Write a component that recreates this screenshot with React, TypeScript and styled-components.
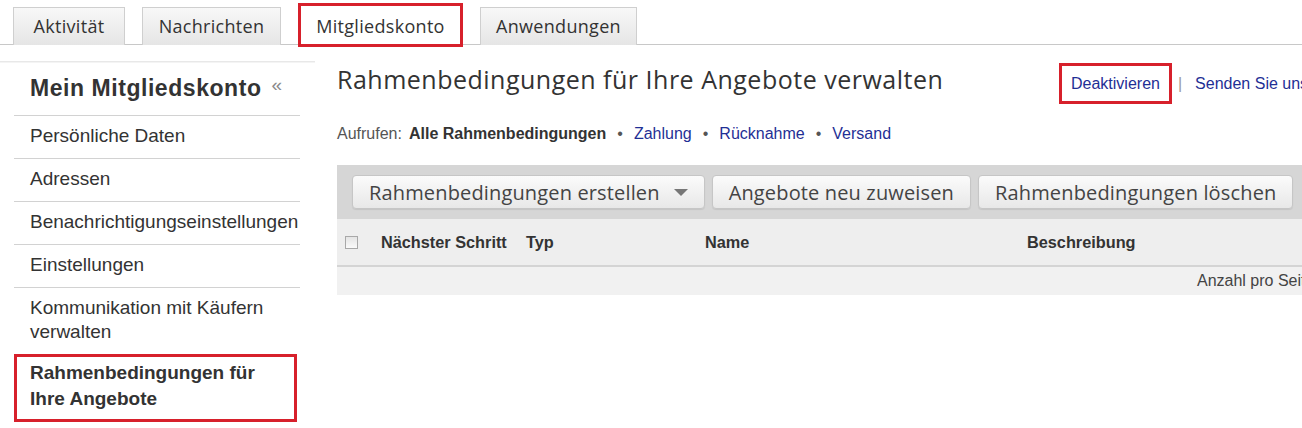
import React from "react";
import styled, { createGlobalStyle } from "styled-components";

const Global = createGlobalStyle`
  html, body { margin: 0; padding: 0; background: #fff; }
  body { font-family: "Liberation Sans", Arial, sans-serif; color: #333; }
  * { box-sizing: border-box; }
`;

const HUMAN = `"Open Sans", "Lato", sans-serif`;

const Page = styled.div`
  width: 1302px;
  height: 428px;
  overflow: hidden;
  background: #fff;
`;

const TabBar = styled.div`
  display: flex;
  align-items: flex-end;
  gap: 17px;
  height: 45px;
  padding-left: 13px;
  border-bottom: 1px solid #c8c8c8;
`;

const Tab = styled.div<{ $active?: boolean; $w: number }>`
  width: ${(p) => p.$w}px;
  height: 38px;
  margin-bottom: -1px;
  padding-bottom: 1px;
  display: flex;
  align-items: center;
  justify-content: center;
  font-family: ${HUMAN};
  font-size: 18px;
  letter-spacing: 0.3px;
  color: #333;
  white-space: nowrap;
  border: 1px solid #cfcfcf;
  border-bottom: none;
  background: linear-gradient(#f8f8f8, #e5e5e5);
  ${(p) =>
    p.$active
      ? `
    height: 44px;
    margin-bottom: -3px;
    padding-bottom: 0;
    padding-top: 2px;
    background: #fff;
    border: 3px solid #d7202b;
  `
      : ""}
`;

const Body = styled.div`
  display: flex;
  align-items: flex-start;
`;

const Sidebar = styled.nav`
  flex: 0 0 300px;
  width: 300px;
  min-width: 0;
  padding-left: 14px;
  margin-top: 16px;
  position: relative;
  &::before {
    content: "";
    position: absolute;
    left: 0;
    right: -15px;
    top: 0;
    height: 2px;
    background: linear-gradient(#e2e2e2, #fafafa);
  }
`;

const SideHead = styled.div`
  height: 55px;
  display: flex;
  align-items: center;
  padding-left: 16px;
  font-size: 23px;
  letter-spacing: 0.55px;
  font-weight: bold;
  color: #333;
  white-space: nowrap;
  border-bottom: 1px solid #d2d2d2;
`;

const Collapse = styled.span`
  margin-left: 10px;
  font-size: 19px;
  font-weight: normal;
  letter-spacing: 0;
  color: #8a8a8a;
  position: relative;
  top: -3px;
`;

const SideItem = styled.div<{ $current?: boolean; $last?: boolean }>`
  padding: 8px 0 10px 16px;
  font-size: 19px;
  line-height: 24px;
  color: #333;
  white-space: nowrap;
  border-bottom: ${(p) => (p.$last ? "none" : "1px solid #d2d2d2")};
  ${(p) =>
    p.$current
      ? `font-weight: bold; border: 3px solid #d7202b; padding: 3px 13px 7px 13px; line-height: 26px; width: 283px;`
      : ""}
`;

const Main = styled.main`
  flex: 0 0 1000px;
  margin-left: 37px;
`;

const TitleRow = styled.div`
  display: grid;
  grid-template-columns: 722px auto;
  align-items: start;
  height: 80px;
`;

const Title = styled.h1`
  margin: 17px 0 0;
  font-family: ${HUMAN};
  font-weight: normal;
  font-size: 25px;
  line-height: 34px;
  letter-spacing: 0.5px;
  color: #333;
  white-space: nowrap;
`;

const TopLinks = styled.div`
  margin-top: 18px;
  display: flex;
  align-items: center;
  font-size: 16px;
  white-space: nowrap;
`;

const Highlight = styled.span`
  border: 3px solid #d7202b;
  padding: 9px;
  line-height: 17px;
  color: #1f2f95;
`;

const Pipe = styled.span`
  color: #999;
  margin: 0 13px 0 6px;
`;

const BlueLink = styled.a`
  color: #1f2f95;
  text-decoration: none;
`;

const ViewBar = styled.div`
  font-size: 16px;
  line-height: 18px;
  color: #555;
  height: 40px;
  display: flex;
  align-items: flex-start;
  white-space: nowrap;
`;

const Current = styled.b`
  color: #333;
  margin-left: 7px;
`;

const Dot = styled.span`
  color: #555;
  margin: 0 11px;
`;

const Toolbar = styled.div`
  background: #d6d6d6;
  height: 54px;
  display: flex;
  align-items: center;
  gap: 7px;
  padding-left: 15px;
`;

const Button = styled.div`
  height: 34px;
  padding: 0 16px;
  display: flex;
  align-items: center;
  gap: 14px;
  border-radius: 4px;
  border: 1px solid #c6c6c6;
  background: linear-gradient(#fbfbfb, #e8e8e8);
  box-shadow: 0 1px 1px rgba(0, 0, 0, 0.08);
  font-family: ${HUMAN};
  font-size: 20px;
  letter-spacing: 0.15px;
  color: #444;
  white-space: nowrap;
`;

const Caret = styled.span`
  width: 0;
  height: 0;
  border-left: 7px solid transparent;
  border-right: 7px solid transparent;
  border-top: 7px solid #777;
`;

const HeaderRow = styled.div`
  display: grid;
  grid-template-columns: 44px 145px 179px 322px 1fr;
  align-items: center;
  height: 48px;
  background: #eeeeee;
  border-bottom: 2px solid #d4d4d4;
  font-size: 16.3px;
  font-weight: bold;
  color: #333;
  white-space: nowrap;
`;

const Check = styled.span`
  width: 13px;
  height: 13px;
  margin-left: 8px;
  border: 1px solid #a8a8a8;
  background: linear-gradient(#e4e4e4, #fafafa);
`;

const FooterRow = styled.div`
  height: 28px;
  background: #f1f1f1;
  display: flex;
  align-items: center;
  padding-left: 860px;
  font-size: 16px;
  color: #444;
  white-space: nowrap;
  overflow: hidden;
`;

const sideItems = [
  "Persönliche Daten",
  "Adressen",
  "Benachrichtigungseinstellungen",
  "Einstellungen",
];

const tabs = [
  { label: "Aktivität", w: 112 },
  { label: "Nachrichten", w: 139 },
  { label: "Mitgliedskonto", w: 165, active: true },
  { label: "Anwendungen", w: 157 },
];

export default function App() {
  return (
    <Page>
      <Global />
      <TabBar>
        {tabs.map((t) => (
          <Tab key={t.label} $w={t.w} $active={t.active}>
            {t.label}
          </Tab>
        ))}
      </TabBar>
      <Body>
        <Sidebar>
          <SideHead>
            Mein Mitgliedskonto<Collapse>«</Collapse>
          </SideHead>
          {sideItems.map((s) => (
            <SideItem key={s}>{s}</SideItem>
          ))}
          <SideItem $last>
            Kommunikation mit Käufern
            <br />
            verwalten
          </SideItem>
          <SideItem $current>
            Rahmenbedingungen für
            <br />
            Ihre Angebote
          </SideItem>
        </Sidebar>
        <Main>
          <TitleRow>
            <Title>Rahmenbedingungen für Ihre Angebote verwalten</Title>
            <TopLinks>
              <Highlight>Deaktivieren</Highlight>
              <Pipe>|</Pipe>
              <BlueLink>Senden Sie uns Ihre Meinung</BlueLink>
            </TopLinks>
          </TitleRow>
          <ViewBar>
            Aufrufen:<Current>Alle Rahmenbedingungen</Current>
            <Dot>•</Dot>
            <BlueLink>Zahlung</BlueLink>
            <Dot>•</Dot>
            <BlueLink>Rücknahme</BlueLink>
            <Dot>•</Dot>
            <BlueLink>Versand</BlueLink>
          </ViewBar>
          <Toolbar>
            <Button>
              Rahmenbedingungen erstellen
              <Caret />
            </Button>
            <Button>Angebote neu zuweisen</Button>
            <Button>Rahmenbedingungen löschen</Button>
          </Toolbar>
          <HeaderRow>
            <Check />
            <span>Nächster Schritt</span>
            <span>Typ</span>
            <span>Name</span>
            <span>Beschreibung</span>
          </HeaderRow>
          <FooterRow>Anzahl pro Seite</FooterRow>
        </Main>
      </Body>
    </Page>
  );
}
